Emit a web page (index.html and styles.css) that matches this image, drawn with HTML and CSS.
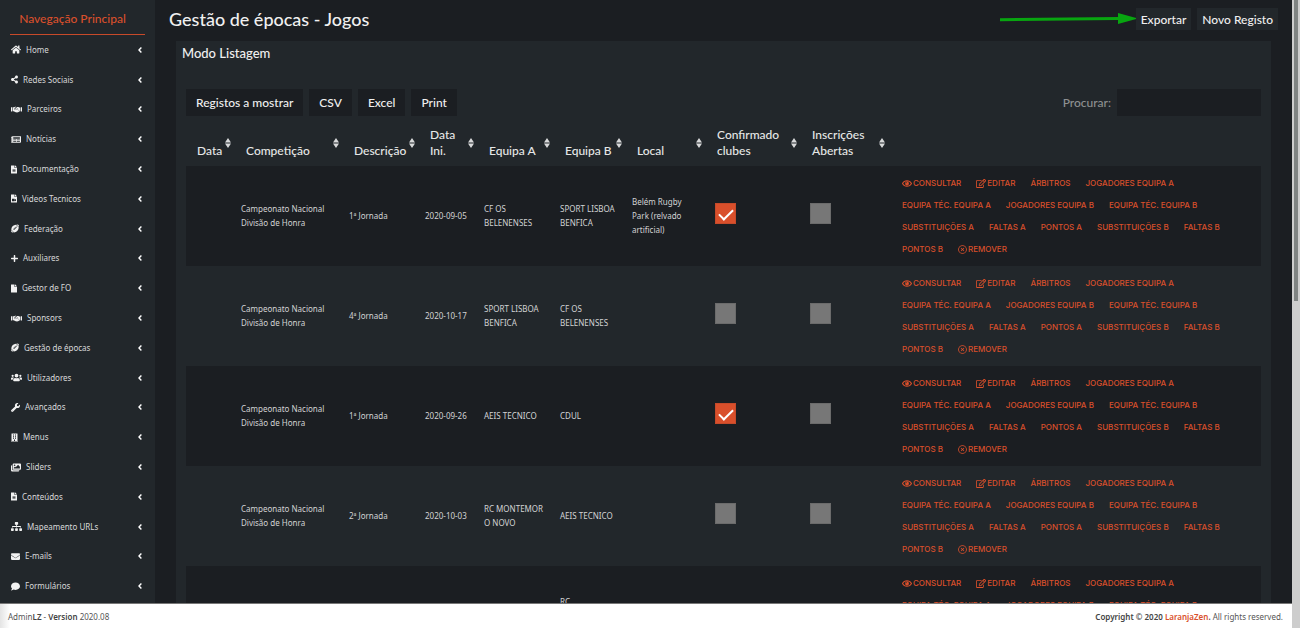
FILE: index.html
```html
<!DOCTYPE html>
<html lang="pt">
<head>
  <meta charset="UTF-8">
  <title>Gestão de épocas - Jogos</title>
  <meta name="viewport" content="width=device-width, initial-scale=1">
  <link rel="stylesheet" href="styles.css">
</head>
<body>
  <div class="page">
    <div class="content">
      <nav class="sidebar">
        <h2>Navegação Principal</h2>
        <ul id="menu"></ul>
      </nav>

      <main>
        <header class="page-header">
          <h1>Gestão de épocas - Jogos</h1>
          <svg class="arrow" width="138" height="12" viewBox="0 0 138 12">
            <path d="M0 5.3L118 4V0L138 5.5L118 11V7L0 8.3z"/>
          </svg>
          <button type="button">Exportar</button>
          <button type="button">Novo Registo</button>
        </header>

        <section class="panel">
          <h3>Modo Listagem</h3>
          <div class="toolbar">
            <button type="button">Registos a mostrar</button>
            <button type="button">CSV</button>
            <button type="button">Excel</button>
            <button type="button">Print</button>
            <label for="search">Procurar:</label>
            <input type="text" id="search">
          </div>

          <table>
            <colgroup>
              <col class="c-data"><col class="c-comp"><col class="c-desc"><col class="c-ini"><col class="c-a">
              <col class="c-b"><col class="c-local"><col class="c-conf"><col class="c-insc"><col>
            </colgroup>
            <thead>
              <tr id="heads"></tr>
            </thead>
            <tbody id="games"></tbody>
          </table>
        </section>
      </main>
    </div>

    <footer>
      <span>Admin<b>LZ</b> - <b>Version</b> 2020.08</span>
      <span><b>Copyright © 2020 <a href="#">LaranjaZen</a>.</b> All rights reserved.</span>
    </footer>
  </div>
  <div class="scrollbar"><div class="thumb"></div></div>

  <script>
    // name: [viewBox width, path], all 512 high
    const icons = {
      home: [576, 'M280 148L96 300V464a16 16 0 0 0 16 16h112a16 16 0 0 0 16-16V368a16 16 0 0 1 16-16h64a16 16 0 0 1 16 16v96a16 16 0 0 0 16 16h112a16 16 0 0 0 16-16V300L296 148a12 12 0 0 0-16 0zM572 251L488 182V44a12 12 0 0 0-12-12h-56a12 12 0 0 0-12 12v73L318 43a48 48 0 0 0-61 0L4 251a12 12 0 0 0-1 17l25 31a12 12 0 0 0 17 2L280 107a12 12 0 0 1 16 0L531 301a12 12 0 0 0 17-2l25-31a12 12 0 0 0-1-17z'],
      share: [448, 'M352 320c-23 0-43 8-60 21l-102-64a97 97 0 0 0 0-42l102-64c17 13 37 21 60 21 53 0 96-43 96-96S405 0 352 0s-96 43-96 96c0 7 1 14 2 21l-102 64c-17-13-37-21-60-21-53 0-96 43-96 96s43 96 96 96c23 0 43-8 60-21l102 64a96 96 0 0 0-2 21c0 53 43 96 96 96s96-43 96-96-43-96-96-96z'],
      handshake: [640, 'M0 128h64v240H0zM576 128h64v240h-64zM96 128h90l54-32h66l-92 88c-24 24-22 62 2 84 26 24 62 20 84 2l48-44 154 126c-6 20-22 34-42 30-6 22-28 36-50 26-16 26-48 34-70 10-26 12-44 8-62-8L150 352H96zM544 352h-24L368 228l20-18-22-24-88 80c-14 12-34 12-46 0-12-14-10-34 2-46l106-98c12-12 22-18 40-18h50l50 32h64z'],
      newspaper: [576, 'M552 64H88c-13 0-24 11-24 24v8H24c-13 0-24 11-24 24v280c0 27 21 48 48 48h480c27 0 48-21 48-48V88c0-13-11-24-24-24zM32 384V144h32v240a16 16 0 0 1-32 0zM128 208V128h384v80zM128 256h176v40H128zM344 256h168v40H344zM128 344h176v40H128zM344 344h168v40H344z'],
      doc: [384, 'M224 136V0H24C11 0 0 11 0 24v464c0 13 11 24 24 24h336c13 0 24-11 24-24V160H248c-13 0-24-11-24-24zM288 400H96v-40h192zM288 328H96v-40h192zM288 256H96v-40h192zM384 122v6H256V0h6c6 0 12 3 17 7l98 98c4 4 7 10 7 17z'],
      video: [384, 'M224 136V0H24C11 0 0 11 0 24v464c0 13 11 24 24 24h336c13 0 24-11 24-24V160H248c-13 0-24-11-24-24zM320 280v144l-96-48v48H64V264h160v64zM384 122v6H256V0h6c6 0 12 3 17 7l98 98c4 4 7 10 7 17z'],
      file: [384, 'M224 136V0H24C11 0 0 11 0 24v464c0 13 11 24 24 24h336c13 0 24-11 24-24V160H248c-13 0-24-11-24-24zM384 122v6H256V0h6c6 0 12 3 17 7l98 98c4 4 7 10 7 17z'],
      ball: [496, 'M482 60c-4-18-20-32-36-36-46-12-82-16-112-16L490 164c1-35-2-70-8-104zM12 348c-3 32 0 66 4 102 4 18 16 32 34 36 40 12 76 16 112 17zM14 320L190 497c162-18 270-104 294-305L308 16C150 34 36 118 14 320zM140 334l34-34-22-22 22-22 22 22 34-34-22-22 22-22 22 22 34-34-22-22 22-22 22 22 34-34 22 22-34 34 22 22-22 22-22-22-34 34 22 22-22 22-22-22-34 34 22 22-22 22-22-22-34 34z'],
      plus: [448, 'M416 208H272V64c0-18-14-32-32-32h-32c-18 0-32 14-32 32v144H32c-18 0-32 14-32 32v32c0 18 14 32 32 32h144v144c0 18 14 32 32 32h32c18 0 32-14 32-32V304h144c18 0 32-14 32-32v-32c0-18-14-32-32-32z'],
      users: [640, 'M96 224a64 64 0 1 0 0-128 64 64 0 0 0 0 128zM544 224a64 64 0 1 0 0-128 64 64 0 0 0 0 128zM576 256h-64c-18 0-34 7-45 18 40 22 69 62 75 110h66c18 0 32-14 32-32v-32c0-35-29-64-64-64zM320 256a112 112 0 1 0 0-224 112 112 0 0 0 0 224zM397 288c-50 22-104 22-154 0-64 0-115 52-115 115v29c0 26 22 48 48 48h288c26 0 48-22 48-48v-29c0-63-51-115-115-115zM173 274c-11-11-27-18-45-18H64c-35 0-64 29-64 64v32c0 18 14 32 32 32h66c6-48 35-88 75-110z'],
      wrench: [512, 'M508 109c-2-9-14-12-20-5l-75 74-68-11-11-68 75-74c6-7 4-18-6-20a144 144 0 0 0-172 187L19 404a64 64 0 0 0 90 90l212-212a144 144 0 0 0 187-173zM64 472a24 24 0 1 1 0-48 24 24 0 0 1 0 48z'],
      building: [448, 'M436 480h-20V24c0-13-11-24-24-24H56C43 0 32 11 32 24v456H12c-7 0-12 5-12 12v20h448v-20c0-7-5-12-12-12zM128 64h64v64h-64zM128 170h64v64h-64zM192 340h-64v-64h64zM256 480h-64v-96h64zM320 340h-64v-64h64zM320 234h-64v-64h64zM320 128h-64V64h64z'],
      images: [576, 'M480 416v16c0 27-21 48-48 48H48c-27 0-48-21-48-48V176c0-27 21-48 48-48h16v208c0 44 36 80 80 80zM576 336V80c0-27-21-48-48-48H144c-27 0-48 21-48 48v256c0 27 21 48 48 48h384c27 0 48-21 48-48zM256 128a48 48 0 1 1-96 0 48 48 0 0 1 96 0zM160 272l72-72 40 40 136-136 104 104v112H160z'],
      sitemap: [640, 'M128 352H32c-18 0-32 14-32 32v96c0 18 14 32 32 32h96c18 0 32-14 32-32v-96c0-18-14-32-32-32zM104 320v-40h192v40h48v-40h192v40h48v-50c0-21-17-38-38-38H344v-72h40c18 0 32-14 32-32V32c0-18-14-32-32-32H256c-18 0-32 14-32 32v96c0 18 14 32 32 32h40v72H94c-21 0-38 17-38 38v50zM368 352h-96c-18 0-32 14-32 32v96c0 18 14 32 32 32h96c18 0 32-14 32-32v-96c0-18-14-32-32-32zM608 352h-96c-18 0-32 14-32 32v96c0 18 14 32 32 32h96c18 0 32-14 32-32v-96c0-18-14-32-32-32z'],
      envelope: [512, 'M502 191c4-3 10 0 10 5v204c0 27-21 48-48 48H48c-27 0-48-21-48-48V196c0-5 6-8 10-5 22 17 52 40 154 113 21 15 57 48 92 48s72-33 92-48c102-73 132-96 154-113zM256 320c23 0 57-29 73-41 133-96 143-105 174-128 6-5 9-12 9-19v-20c0-27-21-48-48-48H48c-27 0-48 21-48 48v20c0 7 3 14 9 19 31 23 41 32 174 128 16 12 50 41 73 41z'],
      comment: [512, 'M256 32C115 32 0 125 0 240c0 50 21 95 57 131-12 50-54 95-55 95-5 6-1 14 6 14 66 0 116-32 140-51 33 12 69 19 108 19 141 0 256-93 256-208S397 32 256 32z'],
      eye: [576, 'M573 241C518 136 411 64 288 64S58 136 3 241a32 32 0 0 0 0 30c55 105 162 177 285 177s230-72 285-177a32 32 0 0 0 0-30zM288 392c-90 0-170-50-220-136 50-86 130-136 220-136s170 50 220 136c-50 86-130 136-220 136zM288 144a112 112 0 1 0 0 224 112 112 0 0 0 0-224zM240 256a52 52 0 0 1 48-60v-24a84 84 0 0 0-78 84z'],
      edit: [576, 'M402 344l32-32c5-5 14-1 14 6v146c0 26-22 48-48 48H48c-26 0-48-22-48-48V112c0-26 22-48 48-48h274c7 0 11 9 6 14l-32 32c-2 2-4 2-6 2H48v352h352V350c0-2 1-4 2-6zM559 143L296 406l-90 10c-26 3-49-19-46-46l10-90L433 17c23-23 60-23 83 0l43 43c23 23 23 60 0 83zM460 174l-58-58-186 186-8 66 66-8zM525 94l-43-43c-4-4-11-4-15 0l-31 31 58 58 31-31c4-4 4-11 0-15z'],
      times: [512, 'M256 8a248 248 0 1 0 0 496 248 248 0 0 0 0-496zM256 456a200 200 0 1 1 0-400 200 200 0 0 1 0 400zM358 188L290 256l68 68-34 34-68-68-68 68-34-34 68-68-68-68 34-34 68 68 68-68z']
    };

    function icon(name) {
      const [w, d] = icons[name];
      return `<svg class="icon" width="${Math.round(w / 60)}" height="9" viewBox="0 0 ${w} 512"><path fill-rule="evenodd" d="${d}"/></svg>`;
    }

    const menu = [
      ['home', 'Home'], ['share', 'Redes Sociais'], ['handshake', 'Parceiros'], ['newspaper', 'Notícias'],
      ['doc', 'Documentação'], ['video', 'Videos Tecnicos'], ['ball', 'Federação'], ['plus', 'Auxiliares'],
      ['file', 'Gestor de FO'], ['handshake', 'Sponsors'], ['ball', 'Gestão de épocas'], ['users', 'Utilizadores'],
      ['wrench', 'Avançados'], ['building', 'Menus'], ['images', 'Sliders'], ['doc', 'Conteúdos'],
      ['sitemap', 'Mapeamento URLs'], ['envelope', 'E-mails'], ['comment', 'Formulários']
    ];
    document.getElementById('menu').innerHTML = menu.map(([i, label]) =>
      `<li><a href="#">${icon(i)}<span>${label}</span>
        <svg class="chevron" width="4" height="6" viewBox="0 0 4 6"><path d="M3.4 .5L1 3l2.4 2.5"/></svg></a></li>`).join('');

    const heads = ['Data', 'Competição', 'Descrição', 'Data<br>Ini.', 'Equipa A', 'Equipa B', 'Local',
      'Confirmado<br>clubes', 'Inscrições<br>Abertas'];
    document.getElementById('heads').innerHTML = heads.map(h =>
      `<th scope="col">${h}<svg class="sort" width="6" height="10" viewBox="0 0 6 10"><path d="M3 0L6 4.5H0zM3 10L6 5.5H0z"/></svg></th>`
    ).join('') + '<th></th>';

    const actions = [
      icon('eye') + 'CONSULTAR', icon('edit') + 'EDITAR', 'ÁRBITROS', 'JOGADORES EQUIPA A', 'EQUIPA TÉC. EQUIPA A',
      'JOGADORES EQUIPA B', 'EQUIPA TÉC. EQUIPA B', 'SUBSTITUIÇÕES A', 'FALTAS A', 'PONTOS A',
      'SUBSTITUIÇÕES B', 'FALTAS B', 'PONTOS B', icon('times') + 'REMOVER'
    ].map(a => `<a href="#">${a}</a>`).join('');

    const games = [
      ['1ª Jornada', '2020-09-05', 'CF OS BELENENSES', 'SPORT LISBOA BENFICA', 'Belém Rugby Park (relvado artificial)', true],
      ['4ª Jornada', '2020-10-17', 'SPORT LISBOA BENFICA', 'CF OS BELENENSES', '', false],
      ['1ª Jornada', '2020-09-26', 'AEIS TECNICO', 'CDUL', '', true],
      ['2ª Jornada', '2020-10-03', 'RC MONTEMOR O NOVO', 'AEIS TECNICO', '', false],
      ['2ª Jornada', '2020-10-03', 'CDUL', 'RC<br>MONTEMOR<br>O NOVO', '', false]
    ];
    document.getElementById('games').innerHTML = games.map(([round, date, a, b, place, ok]) => `
      <tr>
        <td></td><td>Campeonato Nacional Divisão de Honra</td><td>${round}</td><td>${date}</td>
        <td>${a}</td><td>${b}</td><td>${place}</td>
        <td class="check"><input type="checkbox" aria-label="Confirmado clubes" ${ok ? 'checked' : ''}></td>
        <td class="check"><input type="checkbox" aria-label="Inscrições Abertas"></td>
        <td><div class="actions">${actions}</div></td>
      </tr>`).join('');
  </script>
</body>
</html>
```
FILE: styles.css
```css
* {
  box-sizing: border-box;
}

body {
  display: flex;
  height: 100vh;
  margin: 0;
  overflow: hidden;
  font: 8px/14px "Noto Sans", "Open Sans", sans-serif;
  color: #d2d3d4;
  background: #1b1e22;
}

a {
  color: #d94f2b;
  text-decoration: none;
}

h1, h2, h3, button, label, th {
  font-family: Lato, sans-serif;
  font-weight: 500;
}

h1, h2, h3, ul {
  margin: 0;
  padding: 0;
}

.page {
  flex: 1;
  min-width: 0;
  display: flex;
  flex-direction: column;
}

.content {
  flex: 1;
  min-height: 0;
  display: flex;
}

/* sidebar */
.sidebar {
  flex: none;
  width: 155px;
  display: flex;
  flex-direction: column;
  padding: 4px 10px 2px;
  background: #22272b;
}

.sidebar h2 {
  font-size: 12px;
  line-height: 30px;
  text-align: center;
  padding-right: 10px;
  color: #d94f2b;
  border-bottom: 1px solid #c84a2a;
}

.sidebar ul {
  flex: 1;
  display: flex;
  flex-direction: column;
  list-style: none;
}

.sidebar li {
  flex: 1;
  display: flex;
}

.sidebar li a {
  flex: 1;
  display: flex;
  align-items: center;
  gap: 5px;
  padding: 0 3px 0 1px;
  color: #d8d9da;
}

.icon {
  flex: none;
  fill: currentColor;
}

.sidebar .icon {
  color: #f2f2f2;
}

.chevron {
  margin-left: auto;
  fill: none;
  stroke: #fff;
  stroke-width: 1.4;
}

/* main area */
main {
  flex: 1;
  min-width: 0;
  overflow: hidden;
}

button {
  border: 0;
  font-size: 12px;
  color: #f0f0f0;
}

.page-header {
  display: flex;
  align-items: center;
  padding: 8px 14px 11px;
}

h1 {
  font-size: 18px;
  line-height: 22px;
  margin-right: auto;
  color: #f0f0f0;
}

.arrow {
  fill: #08a510;
  margin-right: -2px;
}

.page-header button {
  height: 22px;
  padding: 0 5px;
  background: #22272b;
}

.page-header button + button {
  margin-left: 6px;
}

.panel {
  margin: 0 21px;
  padding: 3px 10px;
  background: #22272b;
}

h3 {
  font-size: 13px;
  line-height: 18px;
  margin: 0 -4px 27px;
  color: #f0f0f0;
}

.toolbar {
  display: flex;
  align-items: center;
  gap: 6px;
}

.toolbar button {
  height: 27px;
  padding: 0 10px;
  background: #1b1e22;
}

.toolbar label {
  margin-left: auto;
  font-size: 12px;
  color: #8e9091;
}

.toolbar input {
  width: 144px;
  height: 27px;
  border: 0;
  padding: 0 8px;
  color: #f0f0f0;
  background: #1b1e22;
}

/* games table */
table {
  width: 100%;
  table-layout: fixed;
  border-collapse: collapse;
}

.c-data { width: 49px; }
.c-comp { width: 108px; }
.c-desc { width: 76px; }
.c-ini { width: 59px; }
.c-a { width: 76px; }
.c-b { width: 72px; }
.c-local { width: 80px; }
.c-conf { width: 95px; }
.c-insc { width: 88px; }

th {
  position: relative;
  height: 50px;
  padding: 0 0 7px 11px;
  font-size: 12px;
  line-height: 16px;
  text-align: left;
  vertical-align: bottom;
  color: #e6e7e7;
}

.sort {
  position: absolute;
  right: 4px;
  top: 22px;
  fill: #d8d9da;
}

td {
  height: 100px;
  padding: 0 6px;
}

td:last-child {
  padding: 0 13px;
}

tbody tr:nth-child(odd) {
  background: #1b1e22;
}

td.check {
  padding: 0 0 5px 9px;
}

.check input {
  display: block;
  appearance: none;
  width: 21px;
  height: 21px;
  margin: 0;
  border: 1px solid #6b6b6b;
  background: #777;
}

.check input:checked {
  border-color: #c54a2a;
  background: #d94f2b;
}

.check input:checked::after {
  content: "";
  display: block;
  width: 6px;
  height: 12px;
  margin: 2px 6px;
  border: solid #fff;
  border-width: 0 2px 2px 0;
  transform: rotate(45deg);
}

.actions {
  display: flex;
  flex-wrap: wrap;
  gap: 0 15px;
  font: 500 8px/22px Inter, sans-serif;
}

.actions a {
  display: flex;
  align-items: center;
  gap: 1px;
}

/* footer */
footer {
  flex: none;
  display: flex;
  justify-content: space-between;
  padding: 6px 9px 4px 8px;
  border-top: 1px solid #777;
  color: #555;
  background: linear-gradient(90deg, #e4e4e4, #fff 10px);
}

footer b {
  font-weight: 600;
  color: #444;
}

.scrollbar {
  flex: none;
  width: 8px;
  padding: 0 2px;
  background: #cdcdcd;
}

.thumb {
  height: 48%;
  background: #7f8382;
}
```
